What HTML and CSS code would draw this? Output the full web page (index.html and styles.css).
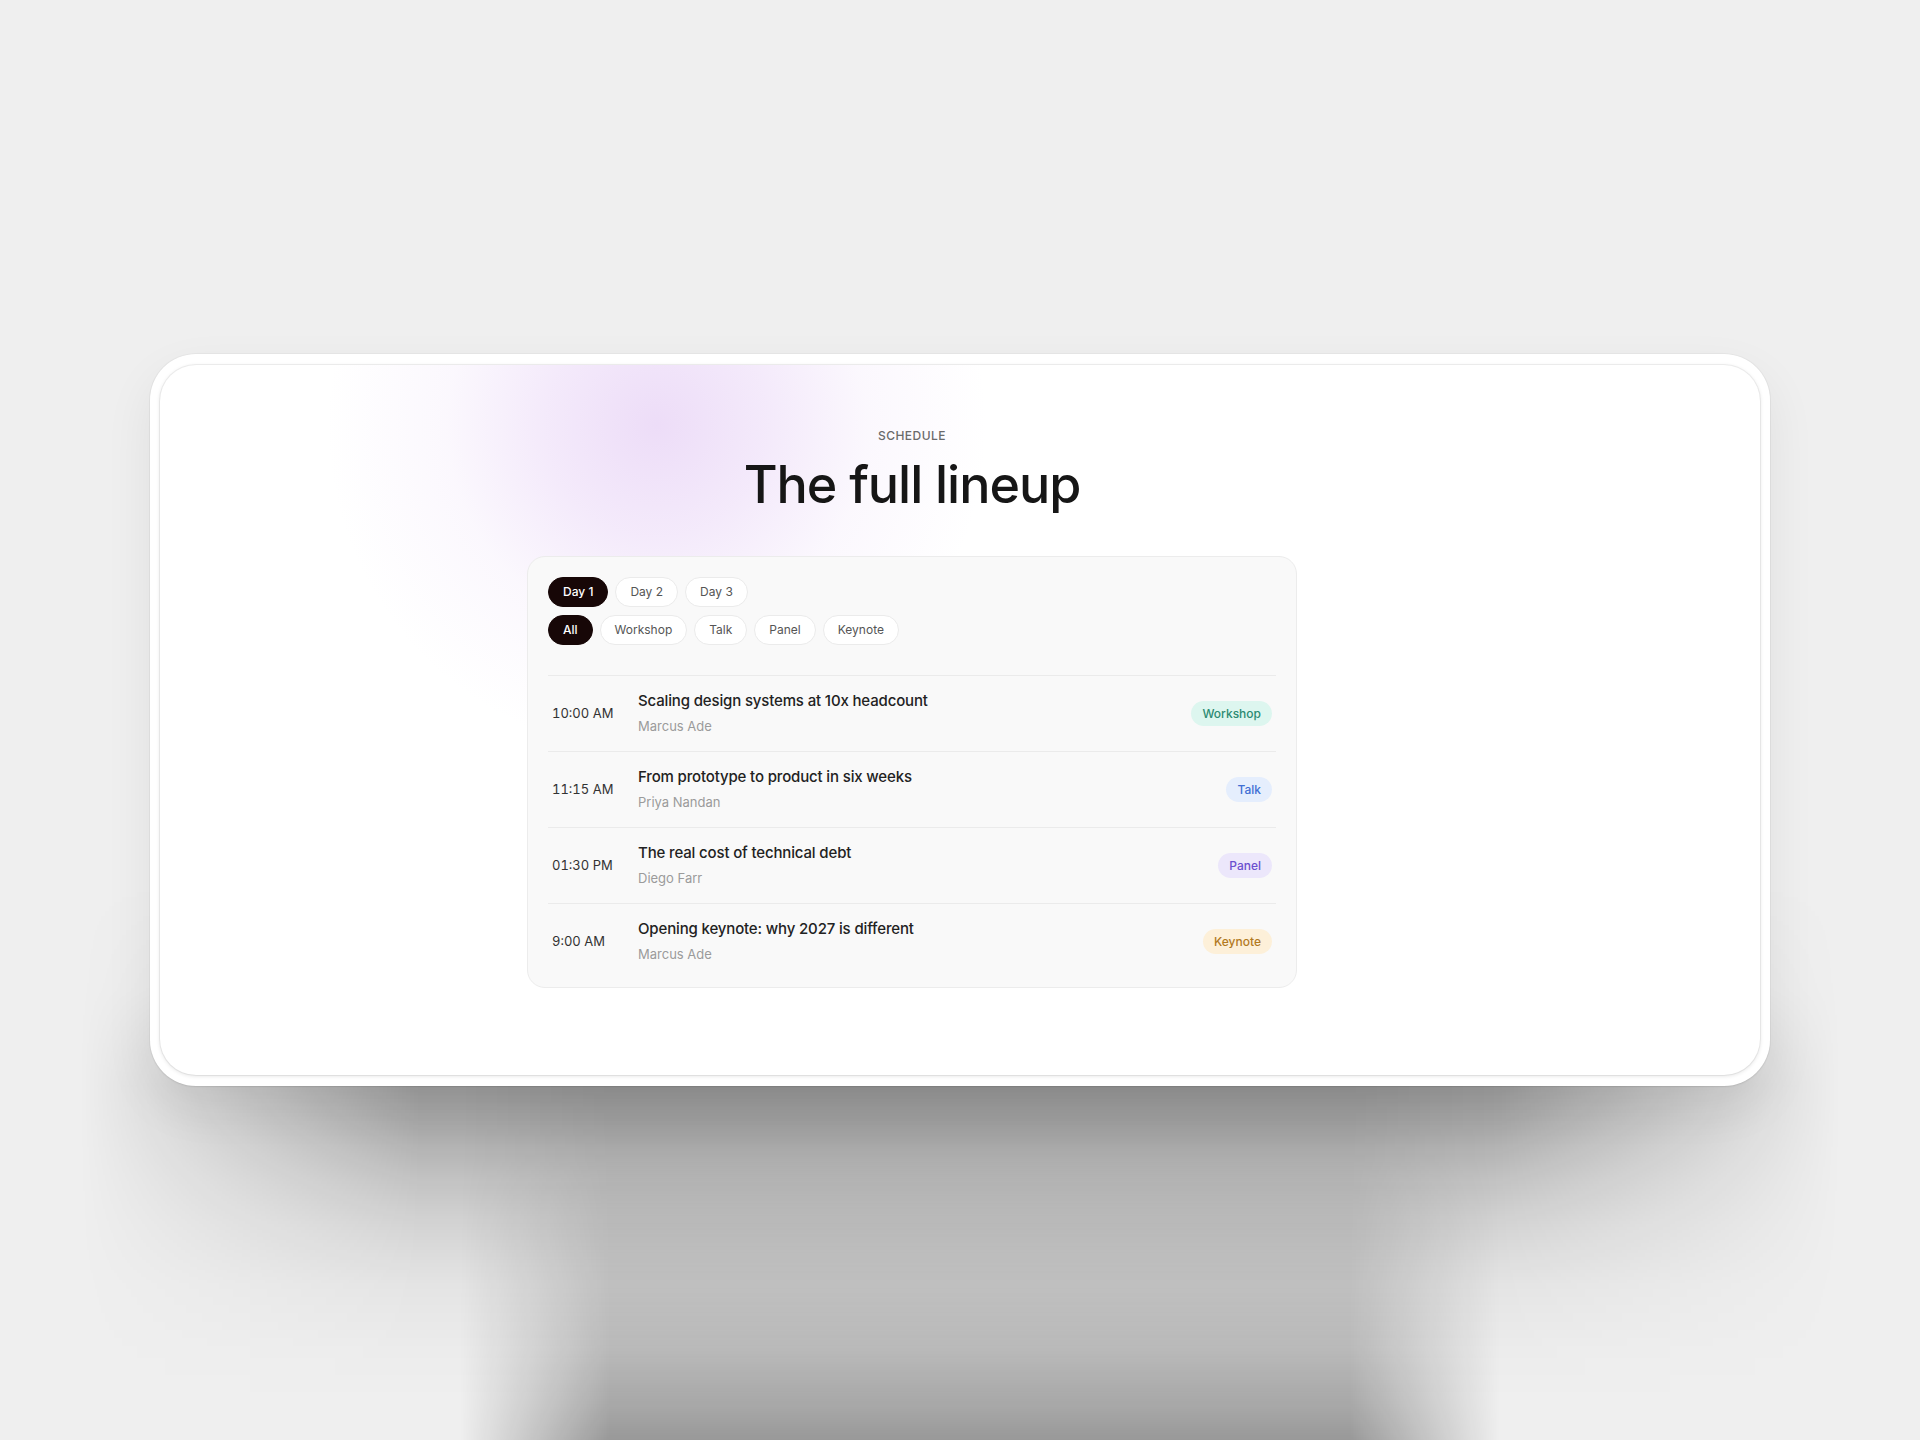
FILE: index.html
```html
<!DOCTYPE html>
<html lang="en">
<head>
<meta charset="utf-8">
<title>Schedule</title>
<link rel="stylesheet" href="styles.css">
</head>
<body>
<div class="shadow-band"></div>
<div class="shadow-column"></div>
<div class="frame">
  <div class="screen">
    <section class="schedule">
      <p class="eyebrow">SCHEDULE</p>
      <h1 class="title">The full lineup</h1>
      <div class="panel">
        <div class="filters">
          <div class="pill-row">
            <button class="pill active">Day 1</button>
            <button class="pill">Day 2</button>
            <button class="pill">Day 3</button>
          </div>
          <div class="pill-row">
            <button class="pill active">All</button>
            <button class="pill">Workshop</button>
            <button class="pill">Talk</button>
            <button class="pill">Panel</button>
            <button class="pill">Keynote</button>
          </div>
        </div>
        <ul class="sessions">
          <li class="session">
            <span class="time">10:00 AM</span>
            <div class="info">
              <div class="session-title">Scaling design systems at 10x headcount</div>
              <div class="speaker">Marcus Ade</div>
            </div>
            <span class="tag tag-workshop">Workshop</span>
          </li>
          <li class="session">
            <span class="time">11:15 AM</span>
            <div class="info">
              <div class="session-title">From prototype to product in six weeks</div>
              <div class="speaker">Priya Nandan</div>
            </div>
            <span class="tag tag-talk">Talk</span>
          </li>
          <li class="session">
            <span class="time">01:30 PM</span>
            <div class="info">
              <div class="session-title">The real cost of technical debt</div>
              <div class="speaker">Diego Farr</div>
            </div>
            <span class="tag tag-panel">Panel</span>
          </li>
          <li class="session">
            <span class="time">9:00 AM</span>
            <div class="info">
              <div class="session-title">Opening keynote: why 2027 is different</div>
              <div class="speaker">Marcus Ade</div>
            </div>
            <span class="tag tag-keynote">Keynote</span>
          </li>
        </ul>
      </div>
    </section>
  </div>
</div>
</body>
</html>
```
FILE: styles.css
```css
* { box-sizing: border-box; }

html, body {
  margin: 0;
  padding: 0;
}

body {
  height: 1440px;
  overflow: hidden;
  position: relative;
  display: flex;
  align-items: center;
  justify-content: center;
  background: #efefef;
  font-family: Inter, "Noto Sans", "Liberation Sans", sans-serif;
  color: #1f1f1f;
}

/* soft shadow cast right under the device frame */
.shadow-band {
  position: absolute;
  left: 0;
  top: 880px;
  width: 1920px;
  height: 560px;
  z-index: 0;
  background: linear-gradient(to bottom,
    rgba(0,0,0,0) 0,
    rgba(0,0,0,0.09) 110px,
    rgba(0,0,0,0.27) 170px,
    rgba(0,0,0,0.35) 206px,
    rgba(0,0,0,0.30) 240px,
    rgba(0,0,0,0.25) 266px,
    rgba(0,0,0,0.185) 300px,
    rgba(0,0,0,0.115) 345px,
    rgba(0,0,0,0.045) 405px,
    rgba(0,0,0,0.011) 470px,
    rgba(0,0,0,0) 520px);
  -webkit-mask-image: linear-gradient(to right, transparent 80px, #000 420px, #000 1500px, transparent 1840px);
  mask-image: linear-gradient(to right, transparent 80px, #000 420px, #000 1500px, transparent 1840px);
}

/* long column of shade reaching the bottom edge */
.shadow-column {
  position: absolute;
  left: 460px;
  top: 1060px;
  width: 1040px;
  height: 380px;
  z-index: 0;
  background: linear-gradient(to bottom,
    rgba(0,0,0,0.05) 0,
    rgba(0,0,0,0.06) 100px,
    rgba(0,0,0,0.12) 165px,
    rgba(0,0,0,0.16) 226px,
    rgba(0,0,0,0.21) 287px,
    rgba(0,0,0,0.30) 348px,
    rgba(0,0,0,0.36) 380px);
  -webkit-mask-image: linear-gradient(to right, transparent 0, #000 150px, #000 890px, transparent 1040px);
  mask-image: linear-gradient(to right, transparent 0, #000 150px, #000 890px, transparent 1040px);
}

.frame {
  position: relative;
  z-index: 1;
  width: 1620px;
  height: 732px;
  padding: 11px 10px;
  background: #fff;
  border-radius: 46px;
  box-shadow:
    0 0 0 1px rgba(0,0,0,0.03),
    0 1px 2px rgba(0,0,0,0.06),
    0 20px 50px rgba(0,0,0,0.07);
}

.screen {
  height: 100%;
  border-radius: 36px;
  overflow: hidden;
  display: flex;
  justify-content: center;
  align-items: flex-start;
  padding: 63px 96px 0 0;
  background:
    radial-gradient(circle at 497px 60px,
      rgba(205,160,235,0.36) 0,
      rgba(210,170,238,0.25) 110px,
      rgba(220,190,242,0.11) 210px,
      rgba(255,255,255,0) 330px),
    #ffffff;
  box-shadow:
    0 0 0 1px rgba(0,0,0,0.05),
    0 1px 4px rgba(0,0,0,0.12);
}

.schedule {
  width: 770px;
  display: flex;
  flex-direction: column;
  align-items: center;
}

.eyebrow {
  margin: 0;
  font-size: 12px;
  line-height: 16px;
  font-weight: 500;
  letter-spacing: 0.04em;
  color: #6a6a6a;
}

.title {
  margin: 12px 0 43px;
  font-size: 52px;
  line-height: 57px;
  font-weight: 500;
  letter-spacing: -0.02em;
  color: #161616;
}

.panel {
  width: 770px;
  border: 1px solid #ececec;
  border-radius: 18px;
  background: #f9f9f9;
  padding: 20px 20px 8px;
}

.filters {
  display: flex;
  flex-direction: column;
  gap: 8px;
}

.pill-row {
  display: flex;
  gap: 7px;
}

.pill {
  margin: 0;
  height: 30px;
  padding: 0 14px;
  border-radius: 999px;
  border: 1px solid #ebebeb;
  background: #fff;
  color: #555;
  font-family: inherit;
  font-size: 12px;
  line-height: 16px;
  font-weight: 400;
  display: inline-flex;
  align-items: center;
}

.pill.active {
  background: #170707;
  border-color: #170707;
  color: #fff;
  font-weight: 500;
}

.sessions {
  list-style: none;
  margin: 30px 0 0;
  padding: 0;
}

.session {
  display: flex;
  align-items: center;
  gap: 16px;
  border-top: 1px solid #ebebeb;
  padding: 15px 4px 16px;
}

.time {
  width: 70px;
  flex-shrink: 0;
  font-size: 13px;
  line-height: 20px;
  color: #333;
  font-variant-numeric: tabular-nums;
}

.info {
  flex: 1;
  min-width: 0;
}

.session-title {
  font-size: 15px;
  line-height: 20px;
  font-weight: 500;
  letter-spacing: -0.01em;
  color: #222;
}

.speaker {
  margin-top: 6px;
  font-size: 13px;
  line-height: 18px;
  color: #9b9b9b;
}

.tag {
  flex-shrink: 0;
  padding: 4px 11px;
  border-radius: 999px;
  font-size: 12px;
  line-height: 17px;
  font-weight: 500;
}

.tag-workshop { background: #ddf6ef; color: #2c8a72; }
.tag-talk { background: #e5eefd; color: #3f6fd4; }
.tag-panel { background: #ece7fb; color: #6b4fcf; }
.tag-keynote { background: #fdf0d9; color: #b27a1f; }
```
